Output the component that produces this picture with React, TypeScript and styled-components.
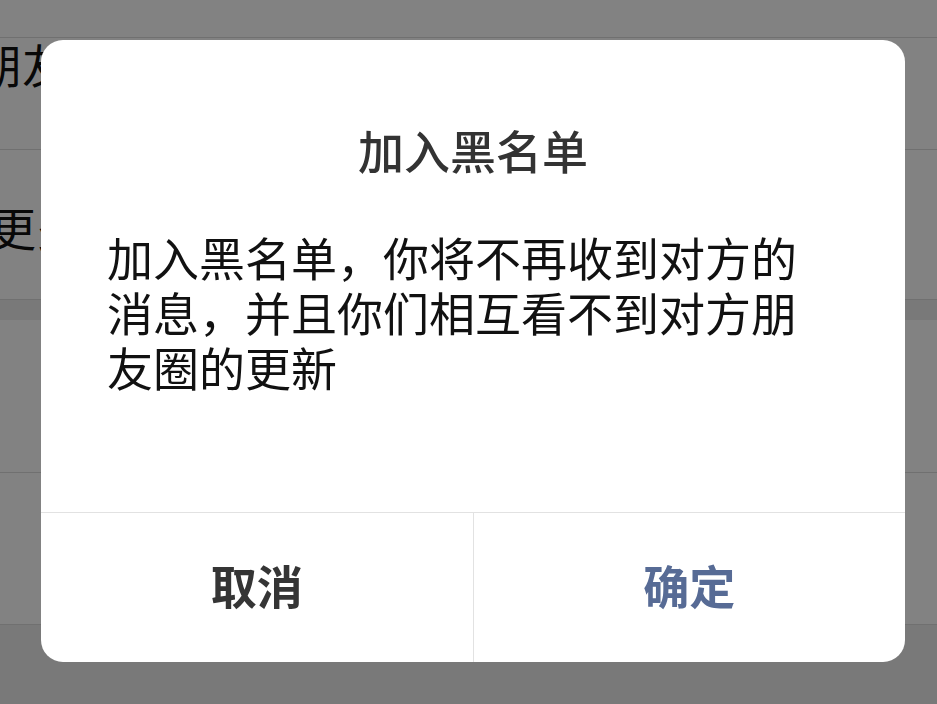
import styled, { createGlobalStyle } from "styled-components";

const GlobalStyle = createGlobalStyle`
  html, body {
    margin: 0;
    padding: 0;
    background: #ededed;
    font-family: "Noto Sans CJK SC", "Noto Sans", sans-serif;
  }
  * {
    box-sizing: border-box;
  }
`;

const Page = styled.div`
  width: 937px;
  height: 704px;
  overflow: hidden;
  background: #ededed;
`;

const TopBar = styled.div`
  height: 38px;
  background: #fff;
  border-bottom: 1px solid #dcdcdc;
`;

const Row = styled.div<{ $h: number; $top?: number }>`
  height: ${(p) => p.$h}px;
  padding-top: ${(p) => p.$top ?? 0}px;
  background: #fff;
  border-bottom: 1px solid #dcdcdc;
  display: flex;
  align-items: flex-start;
  overflow: hidden;
`;

const RowLabel = styled.span<{ $offset: number }>`
  margin-left: ${(p) => p.$offset}px;
  font-size: 46px;
  line-height: 50px;
  color: #111;
  white-space: nowrap;
`;

const Gap = styled.div`
  height: 20px;
`;

const Overlay = styled.div`
  position: fixed;
  inset: 0;
  background: rgba(0, 0, 0, 0.49);
`;

const Dialog = styled.div`
  position: absolute;
  top: 40px;
  left: 41px;
  width: 864px;
  height: 622px;
  background: #fff;
  border-radius: 22px;
  overflow: hidden;
  display: flex;
  flex-direction: column;
`;

const Content = styled.div`
  height: 472px;
  padding: 82px 66px 0;
`;

const Title = styled.h2`
  margin: 0;
  text-align: center;
  font-size: 46px;
  line-height: 55px;
  font-weight: 500;
  color: #333;
`;

const Message = styled.p`
  margin: 52px 0 0;
  font-size: 46px;
  line-height: 55px;
  font-weight: 400;
  color: #111;
`;

const Footer = styled.div`
  flex: 1;
  display: flex;
  border-top: 1px solid #e2e2e2;
`;

const Action = styled.button<{ $primary?: boolean }>`
  flex: 1;
  border: none;
  background: transparent;
  font-family: inherit;
  font-size: 46px;
  font-weight: 700;
  color: ${(p) => (p.$primary ? "#576b95" : "#353535")};
  padding: 0 0 8px;
  & + & {
    border-left: 1px solid #e2e2e2;
  }
`;

export default function App() {
  return (
    <>
      <GlobalStyle />
      <Page>
        <TopBar />
        <Row $h={112} $top={0}>
          <RowLabel $offset={-24}>朋友</RowLabel>
        </Row>
        <Row $h={150} $top={51}>
          <RowLabel $offset={-10}>更多</RowLabel>
        </Row>
        <Gap />
        <Row $h={153} />
        <Row $h={152} />
      </Page>
      <Overlay>
        <Dialog>
          <Content>
            <Title>加入黑名单</Title>
            <Message>
              加入黑名单，你将不再收到对方的消息，并且你们相互看不到对方朋友圈的更新
            </Message>
          </Content>
          <Footer>
            <Action>取消</Action>
            <Action $primary>确定</Action>
          </Footer>
        </Dialog>
      </Overlay>
    </>
  );
}
